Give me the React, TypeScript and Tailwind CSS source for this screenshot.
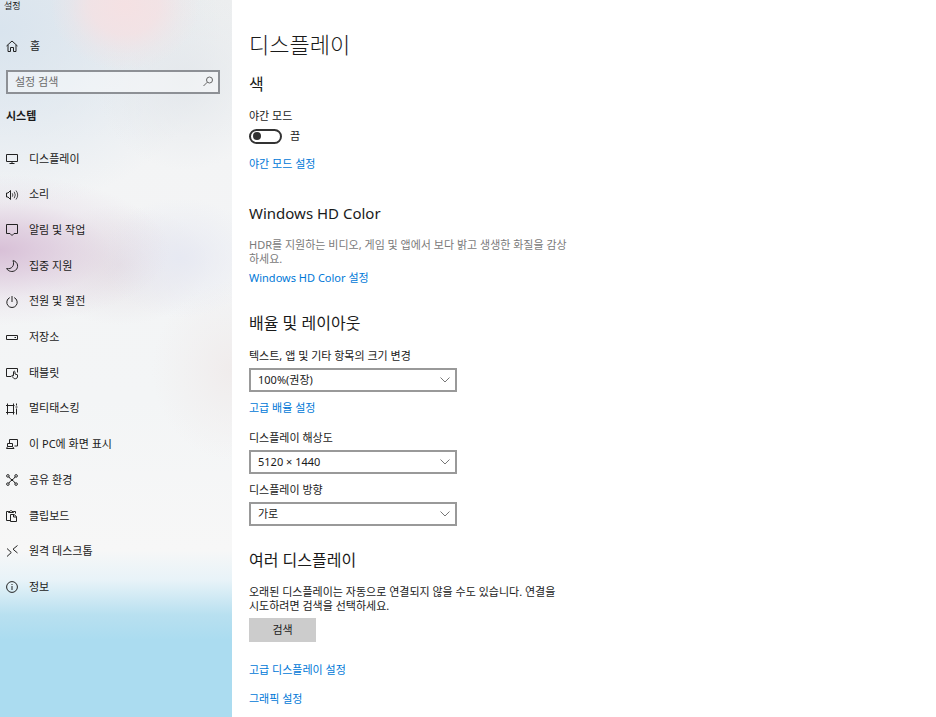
import type { ReactNode } from "react"

const menu: { label: string; icon: ReactNode }[] = [
  {
    label: "디스플레이",
    icon: <path d="M.5 1.5h11v7H.5zM6 8.500v2M3.500 10.500h5" />,
  },
  {
    label: "소리",
    icon: (
      <>
        <path d="M.5 4v4H2l2.500 2.500v-9L2 4z" />
        <path d="M6.300 4.300q1.200 1.700 0 3.400M8.200 2.800q2.200 3.200 0 6.400M10 1.500q3.400 4.500 0 9" strokeWidth=".8" />
      </>
    ),
  },
  {
    label: "알림 및 작업",
    icon: <path d="M.5.5h11v9H8L6 11.500l-2-2H.5z" />,
  },
  {
    label: "집중 지원",
    icon: <path d="M7 .6C12.300 1.800 12.800 7.800 9.600 10.200C6.500 12.500 2.300 11.500.6 8.600C5.500 9.600 9 5.500 7 .6z" />,
  },
  {
    label: "전원 및 절전",
    icon: <path d="M6 0v6M3.800 1.600a5.200 5.200 0 1 0 4.400 0" />,
  },
  {
    label: "저장소",
    icon: <path d="M.5 4.500h11v4H.5zM8.500 6.500h1.500" />,
  },
  {
    label: "태블릿",
    icon: (
      <path d="M5 9.500H.5v-8h11v4M7.500 8.700V4.700q.8-1.200 1.500 0v2.300l2.500.8v2.200q-.4 1.700-2 1.700H8.200L5.600 9q.2-1.400 1.900-.3" />
    ),
  },
  {
    label: "멀티태스킹",
    icon: <path d="M1.500 .5v11M7.500 .5v11M0 2.500h8.500M0 9.500h8.500M10.500 .5v2M10.500 5.500v6M9.500 4h2" />,
  },
  {
    label: "이 PC에 화면 표시",
    icon: <path d="M3.500 5V1.500h8v6.500H8.500M1.500 5.500h5v3h-5zM1.500 8.500l-1 2h7.500l-1.500-2" />,
  },
  {
    label: "공유 환경",
    icon: (
      <>
        <circle cx="1.900" cy="1.900" r="1.300" />
        <circle cx="10.100" cy="1.900" r="1.300" />
        <circle cx="1.900" cy="10.100" r="1.300" />
        <circle cx="10.100" cy="10.100" r="1.300" />
        <path d="M2.800 2.800L5 5.500h2l2.200-2.700M2.800 9.200L5 6.500h2l2.200 2.700" />
      </>
    ),
  },
  {
    label: "클립보드",
    icon: <path d="M4.500 10.500H.5v-9h2M7.500 1.500h2v2M2.500 2.500v-1h1.500L5 .3l1 1.200h1.500v1zM4.500 4.500h3.500l2.500 2v5h-6zM7.500 4.500v2.500h3" />,
  },
  {
    label: "원격 데스크톱",
    icon: <path d="M1 3.500l4.300 4L1 11.500M11.500 .5L7 4.200l4.500 3.800" />,
  },
  {
    label: "정보",
    icon: (
      <>
        <circle cx="6" cy="6" r="5.400" />
        <path d="M6 5v4M6 3v1" />
      </>
    ),
  },
]

function Icon({ children }: { children: ReactNode }) {
  return (
    <svg viewBox="0 0 12 12" className="size-3 shrink-0 overflow-visible fill-none stroke-[#222]" aria-hidden="true">
      {children}
    </svg>
  )
}

function SettingLink({ children }: { children: ReactNode }) {
  return (
    <a href="#" className="block w-fit leading-4 text-[#0078d7] hover:text-gray-500">
      {children}
    </a>
  )
}

function Dropdown({ id, label, value }: { id: string; label: string; value: string }) {
  return (
    <div>
      <label htmlFor={id} className="block leading-4">
        {label}
      </label>
      <div className="relative mt-1 w-52">
        <select
          id={id}
          className="block h-6 w-full appearance-none border-2 border-[#999] bg-white pl-[7px] leading-5 text-[#1a1a1a]"
        >
          <option>{value}</option>
        </select>
        <svg
          viewBox="0 0 10 6"
          className="pointer-events-none absolute top-2 right-[7px] h-2 w-2.5 fill-none stroke-[#777]"
          aria-hidden="true"
        >
          <path d="M.5.5L5 5 9.500.5" />
        </svg>
      </div>
    </div>
  )
}

export default function App() {
  return (
    <div className="flex min-h-screen bg-white font-['Noto_Sans','Noto_Sans_CJK_KR',sans-serif] text-[11px] text-[#1a1a1a]">
      <aside className="w-[232px] shrink-0 bg-[radial-gradient(ellipse_75px_65px_at_125px_5px,#f5e1e3,#f5e1e3cc_45%,#f5e1e344_75%,#f5e1e300),radial-gradient(ellipse_170px_75px_at_0px_250px,#d8c0d7,#d8c0d7aa_30%,#d8c0d733_65%,#d8c0d700),radial-gradient(ellipse_80px_60px_at_180px_258px,#e7e9f2,#e7e9f277_50%,#e7e9f200),radial-gradient(ellipse_90px_60px_at_120px_265px,#e7e3e7,#e7e3e777_50%,#e7e3e700),radial-gradient(ellipse_80px_90px_at_232px_370px,#f0ecec,#f0ecec77_50%,#f0ecec00),radial-gradient(ellipse_90px_90px_at_185px_80px,#e4e8ec,#e4e8ec77_50%,#e4e8ec00),radial-gradient(ellipse_220px_180px_at_0px_30px,#d9e4ee,#d9e4ee88_50%,#d9e4ee00),linear-gradient(#eceeef_0px,#f3f4f5_140px,#f3f5f6_400px,#f7f7f7_550px,#e8f3f8_580px,#b8e0f0_615px,#abdcf0_640px,#abdcf0)]">
        <p className="pl-1 text-[9px] leading-3">설정</p>

        <a href="#" className="mt-[22px] flex h-6 items-center gap-3 pl-1.5">
          <Icon>
            <path d="M.5 6L6 1l5.500 5M2 5v6.500h2.500v-4h3v4H10V5" />
          </Icon>
          홈
        </a>

        <div className="relative mx-1.5 mt-3 mr-3">
          <input
            type="text"
            aria-label="설정 검색"
            placeholder="설정 검색"
            className="block h-6 w-full border-2 border-[#8d9095] bg-white/40 pr-6 pb-0.5 pl-[7px] leading-4 placeholder:text-[#6b6b6b]"
          />
          <svg
            viewBox="0 0 12 12"
            className="pointer-events-none absolute top-1.5 right-1.5 size-3 fill-none stroke-[#666]"
            aria-hidden="true"
          >
            <circle cx="7.500" cy="4" r="3" />
            <path d="M5.300 6.200L1.500 10" />
          </svg>
        </div>

        <h2 className="mt-3.5 pl-1.5 leading-4 font-bold">시스템</h2>

        <nav className="mt-[17px] grid h-[464px] auto-rows-fr">
          {menu.map((item) => (
            <a key={item.label} href="#" className="flex items-center gap-[11px] pl-1.5 hover:bg-black/5">
              <Icon>{item.icon}</Icon>
              {item.label}
            </a>
          ))}
        </nav>
      </aside>

      <main className="min-w-0 flex-1 pt-7 pr-4 pb-2.5 pl-[17px]">
        <h1 className="text-[22px] leading-8 font-light">디스플레이</h1>

        <section className="mt-3">
          <h2 className="text-base leading-6">색</h2>
          <p id="night-mode" className="mt-3 leading-4">
            야간 모드
          </p>
          <div className="mt-1 flex h-4 items-center gap-2">
            <input
              id="night"
              type="checkbox"
              role="switch"
              aria-labelledby="night-mode"
              className="flex h-[15px] w-[33px] appearance-none items-center rounded-full border-2 border-[#333] pl-0.5 before:size-2 before:rounded-full before:bg-[#333]"
            />
            <label htmlFor="night">끔</label>
          </div>
          <div className="mt-3">
            <SettingLink>야간 모드 설정</SettingLink>
          </div>
        </section>

        <section className="mt-[29px]">
          <h2 className="text-[15px] leading-6">Windows HD Color</h2>
          <p className="mt-[13px] leading-[14px] text-[#7a7a7a]">
            HDR를 지원하는 비디오, 게임 및 앱에서 보다 밝고 생생한 화질을 감상
            <br />
            하세요.
          </p>
          <div className="mt-1">
            <SettingLink>Windows HD Color 설정</SettingLink>
          </div>
        </section>

        <section className="mt-[25px]">
          <h2 className="text-base leading-6">배율 및 레이아웃</h2>
          <div className="mt-[13px]">
            <Dropdown id="scale" label="텍스트, 앱 및 기타 항목의 크기 변경" value="100%(권장)" />
          </div>
          <div className="mt-2">
            <SettingLink>고급 배율 설정</SettingLink>
          </div>
          <div className="mt-3.5 space-y-2">
            <Dropdown id="resolution" label="디스플레이 해상도" value="5120 × 1440" />
            <Dropdown id="orientation" label="디스플레이 방향" value="가로" />
          </div>
        </section>

        <section className="mt-[22px]">
          <h2 className="text-base leading-6">여러 디스플레이</h2>
          <p className="mt-[13px] leading-[14px]">
            오래된 디스플레이는 자동으로 연결되지 않을 수도 있습니다. 연결을
            <br />
            시도하려면 검색을 선택하세요.
          </p>
          <button type="button" className="mt-[5px] block h-6 w-[67px] bg-[#ccc] leading-6">
            검색
          </button>
          <div className="mt-5 space-y-[13px]">
            <SettingLink>고급 디스플레이 설정</SettingLink>
            <SettingLink>그래픽 설정</SettingLink>
          </div>
        </section>
      </main>
    </div>
  )
}
